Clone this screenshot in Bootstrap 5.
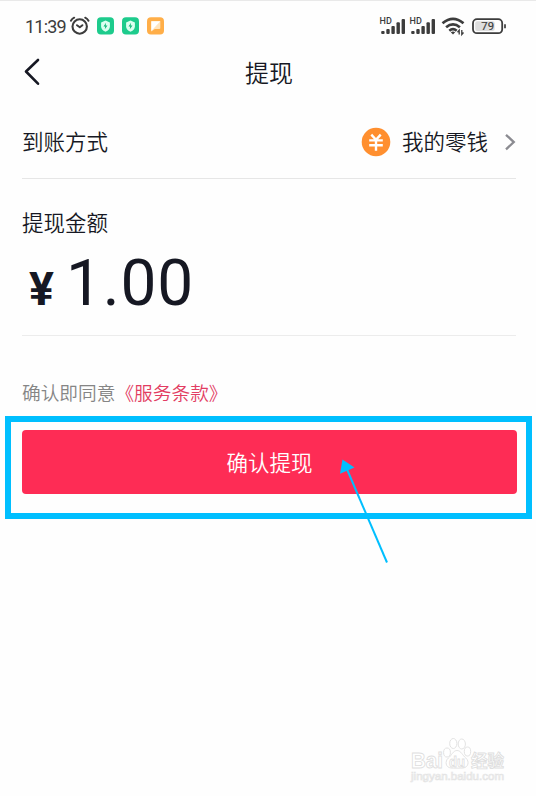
<!DOCTYPE html>
<html lang="zh-CN">
<head>
<meta charset="utf-8">
<meta name="viewport" content="width=device-width, initial-scale=1">
<title>提现</title>
<link href="https://cdn.jsdelivr.net/npm/bootstrap@5.3.0/dist/css/bootstrap.min.css" rel="stylesheet">
<style>
body{font-family:"Noto Sans CJK SC",sans-serif;font-weight:350;color:#161823;background:#fefefe;height:796px;overflow:hidden}
.screen{width:536px;height:796px;border-top:1px solid #e9e9e9}
.status-bar{height:50px;padding-left:25px;padding-right:29px;color:#3c3c3c}
.clock{font:400 18px/1 Roboto,sans-serif;width:44px;letter-spacing:-.8px;white-space:nowrap;padding-top:1px}
.title-bar{height:43px;font-size:24px;line-height:41px;padding-left:2px}
.title-bar .back{left:22px;top:6px}
.content{padding:0 20px 0 22px}
.method{height:85px;font-size:21.5px;border-bottom:1px solid #e6e6e6;padding-top:11px}
.method-name{margin-left:3px}
.amount{height:157px;border-bottom:1px solid #ececec}
.amount-label{font-size:21.5px;line-height:32px;padding-top:27px}
.figure-row{font-family:Roboto,sans-serif;line-height:75px;height:75px;margin-top:8px;padding-left:7px}
.yen{font-size:46.5px;font-weight:700;width:37px;line-height:75px;padding-top:6px}
.num{font-size:64px;font-weight:400;letter-spacing:.8px}
.terms{height:80px;padding-top:42px;font-size:18.7px;line-height:28px;color:#858585;white-space:nowrap}
.terms a{color:#e23c62}
.highlight{margin:0 4px 0 5px;border:6px solid #00bfff;height:103px;padding:8px 9px 0 11px}
.confirm{height:64px;border-radius:4px;background:#fe2c55;color:#fff;font-size:21.5px;font-weight:350;border:0;line-height:59px;padding:0 0 2px}
.pointer{left:330px;top:450px}
.watermark{left:400px;top:730px}
</style>
</head>
<body>
<main class="screen position-relative d-flex flex-column">
  <div class="status-bar d-flex align-items-center justify-content-between">
    <div class="d-flex align-items-center">
      <span class="clock">11:39</span>
      <svg width="98" height="22" viewBox="69 15 98 22">
        <g fill="none" stroke="#3c3c3c" stroke-linecap="round" stroke-linejoin="round">
          <circle cx="79.7" cy="26.5" r="7.2" stroke-width="2.1"/>
          <path d="M77 25.2l2.8 2 2.6-2" stroke-width="2"/>
          <path d="M70.9 20.7q1.2-2 3.3-3M88.5 20.7q-1.2-2-3.3-3" stroke-width="2"/>
        </g>
        <g id="guard">
          <rect x="97" y="17.3" width="17" height="17.3" rx="4" fill="#1dcb8c"/>
          <path d="M105.5 20.6l4.4 1.8v3.8q0 3.7-4.4 5.5-4.4-1.8-4.4-5.5v-3.8z" fill="#dcfff0"/>
          <path d="M106 22.8l-2.5 3.8h1.7l-.4 2.7 2.7-3.8h-1.8z" fill="#13b87a"/>
        </g>
        <use href="#guard" x="25"/>
        <rect x="147" y="17.3" width="17" height="17.3" rx="4" fill="#ffae48"/>
        <path d="M151.3 21.3h9v6.6q0 1-1 1h-4.5l-3.5 2.5z" fill="#ffe4bd"/>
        <path d="M151.3 21.3h9l-9 9.8z" fill="#fff"/>
      </svg>
    </div>
    <svg width="128" height="24" viewBox="379 14 128 24" font-family="Roboto,sans-serif">
      <g id="signal" fill="#3c3c3c">
        <text x="379.5" y="24.2" font-size="8.6" font-weight="500" textLength="12.3" lengthAdjust="spacingAndGlyphs">HD</text>
        <rect x="381.2" y="31" width="3.4" height="3" rx="1"/><rect x="386.3" y="29" width="3.4" height="5" rx="1"/><rect x="391.4" y="26" width="3.4" height="8" rx="1"/><rect x="396.5" y="22.200" width="3.4" height="11.800" rx="1"/><rect x="401.6" y="19" width="3.4" height="15" rx="1"/>
      </g>
      <use href="#signal" x="30"/>
      <g fill="none" stroke="#3c3c3c" stroke-width="2.7">
        <path d="M442.5 23.3q10.5-8.7 21 0M446.1 27.200q6.900-5.700 13.800 0M449.3 30.700q3.700-3 7.400 0"/>
      </g>
      <path d="M450.8 32.2q2.2-1.5 4.4 0l-2.2 2.4z" fill="#3c3c3c"/>
      <path d="M459.2 34.5v-4.2l-1.700 1.900M461.8 30v4.500l1.700-2" fill="none" stroke="#3c3c3c" stroke-width="1.3"/>
      <rect x="473" y="19.2" width="29.2" height="14" rx="4" fill="#fefefe" stroke="#3c3c3c" stroke-width="1.8"/>
      <rect x="475.2" y="21.3" width="19.5" height="9.8" rx="2" fill="#dedede"/>
      <path d="M505 24.2v4" stroke="#3c3c3c" stroke-width="1.7"/>
      <text x="487.7" y="30.2" font-size="11.3" font-weight="400" stroke="#3c3c3c" stroke-width=".15" text-anchor="middle" fill="#3c3c3c">79</text>
    </svg>
  </div>

  <header class="title-bar position-relative text-center">
    <svg class="back position-absolute" width="22" height="30" viewBox="22 57 22 30"><path d="M38 60L26 71.5 38 83.7" fill="none" stroke="#161823" stroke-width="2.6" stroke-linecap="round" stroke-linejoin="round"/></svg>
    提现
  </header>

  <section class="content">
    <div class="method d-flex align-items-center justify-content-between">
      <span>到账方式</span>
      <span class="d-flex align-items-center">
        <svg width="30" height="30" viewBox="0 0 30 30" class="me-2"><circle cx="15" cy="15" r="14.3" fill="#ff8f2f"/><path d="M10.3 7.6l4.7 5.2 4.7-5.2M8.2 13.4h13.6M8.2 18.2h13.6M15 13v10.7" fill="none" stroke="#fff" stroke-width="2.4"/></svg>
        <span class="method-name">我的零钱</span>
        <svg class="ms-3" width="12" height="20" viewBox="0 0 12 20"><path d="M2 2.8l7.8 7.3L2 17.4" fill="none" stroke="#8b8b91" stroke-width="2.3"/></svg>
      </span>
    </div>
    <div class="amount">
      <div class="amount-label">提现金额</div>
      <div class="figure-row d-flex"><span class="yen">¥</span><span class="num">1.00</span></div>
    </div>
    <div class="terms">确认即同意<a class="text-decoration-none" href="#">《服务条款》</a></div>
  </section>

  <div class="highlight">
    <button type="button" class="confirm btn w-100 d-block">确认提现</button>
  </div>

  <svg class="pointer position-absolute pe-none" width="70" height="125" viewBox="330 451 70 125"><path d="M387 562.5L346 467" stroke="#00bfff" stroke-width="2"/><path d="M342.5 459.5l12 8-14.5 6.3z" fill="#00bfff"/></svg>

  <svg class="watermark position-absolute" width="120" height="60" viewBox="400 731 120 60" font-family="Liberation Sans,sans-serif">
    <g fill="#fff" stroke="#dfdfdf" stroke-width=".9">
      <text x="411" y="767.500" font-size="22.500" font-weight="700" textLength="32" lengthAdjust="spacingAndGlyphs">Bai</text>
      <ellipse cx="447" cy="752.5" rx="3.4" ry="4.5"/><ellipse cx="453.3" cy="743.5" rx="3.6" ry="5"/><ellipse cx="461.8" cy="744" rx="3.6" ry="5"/><ellipse cx="467.5" cy="751.5" rx="3.2" ry="4.5"/>
      <path d="M457 750.5c4 0 5.5 5 8.8 7.5 4 3.500 2.500 9.500-2.800 10-3 .2-9 .2-12 0-5.300-.5-6.500-6.500-2.600-10 3.300-2.500 4.600-7.500 8.600-7.500z"/>
      <text x="449" y="766.5" font-size="15" font-weight="700" textLength="16" lengthAdjust="spacingAndGlyphs">du</text>
      <text x="471" y="767" font-size="16.5" font-weight="700" font-family="Noto Sans CJK SC,sans-serif">经验</text>
    </g>
    <text x="411" y="780" font-size="11" textLength="93" lengthAdjust="spacingAndGlyphs" fill="#fff" stroke="#e4e4e4" stroke-width=".7">jingyan.baidu.com</text>
  </svg>
</main>
<script src="https://cdn.jsdelivr.net/npm/bootstrap@5.3.0/dist/js/bootstrap.bundle.min.js"></script>
</body>
</html>
